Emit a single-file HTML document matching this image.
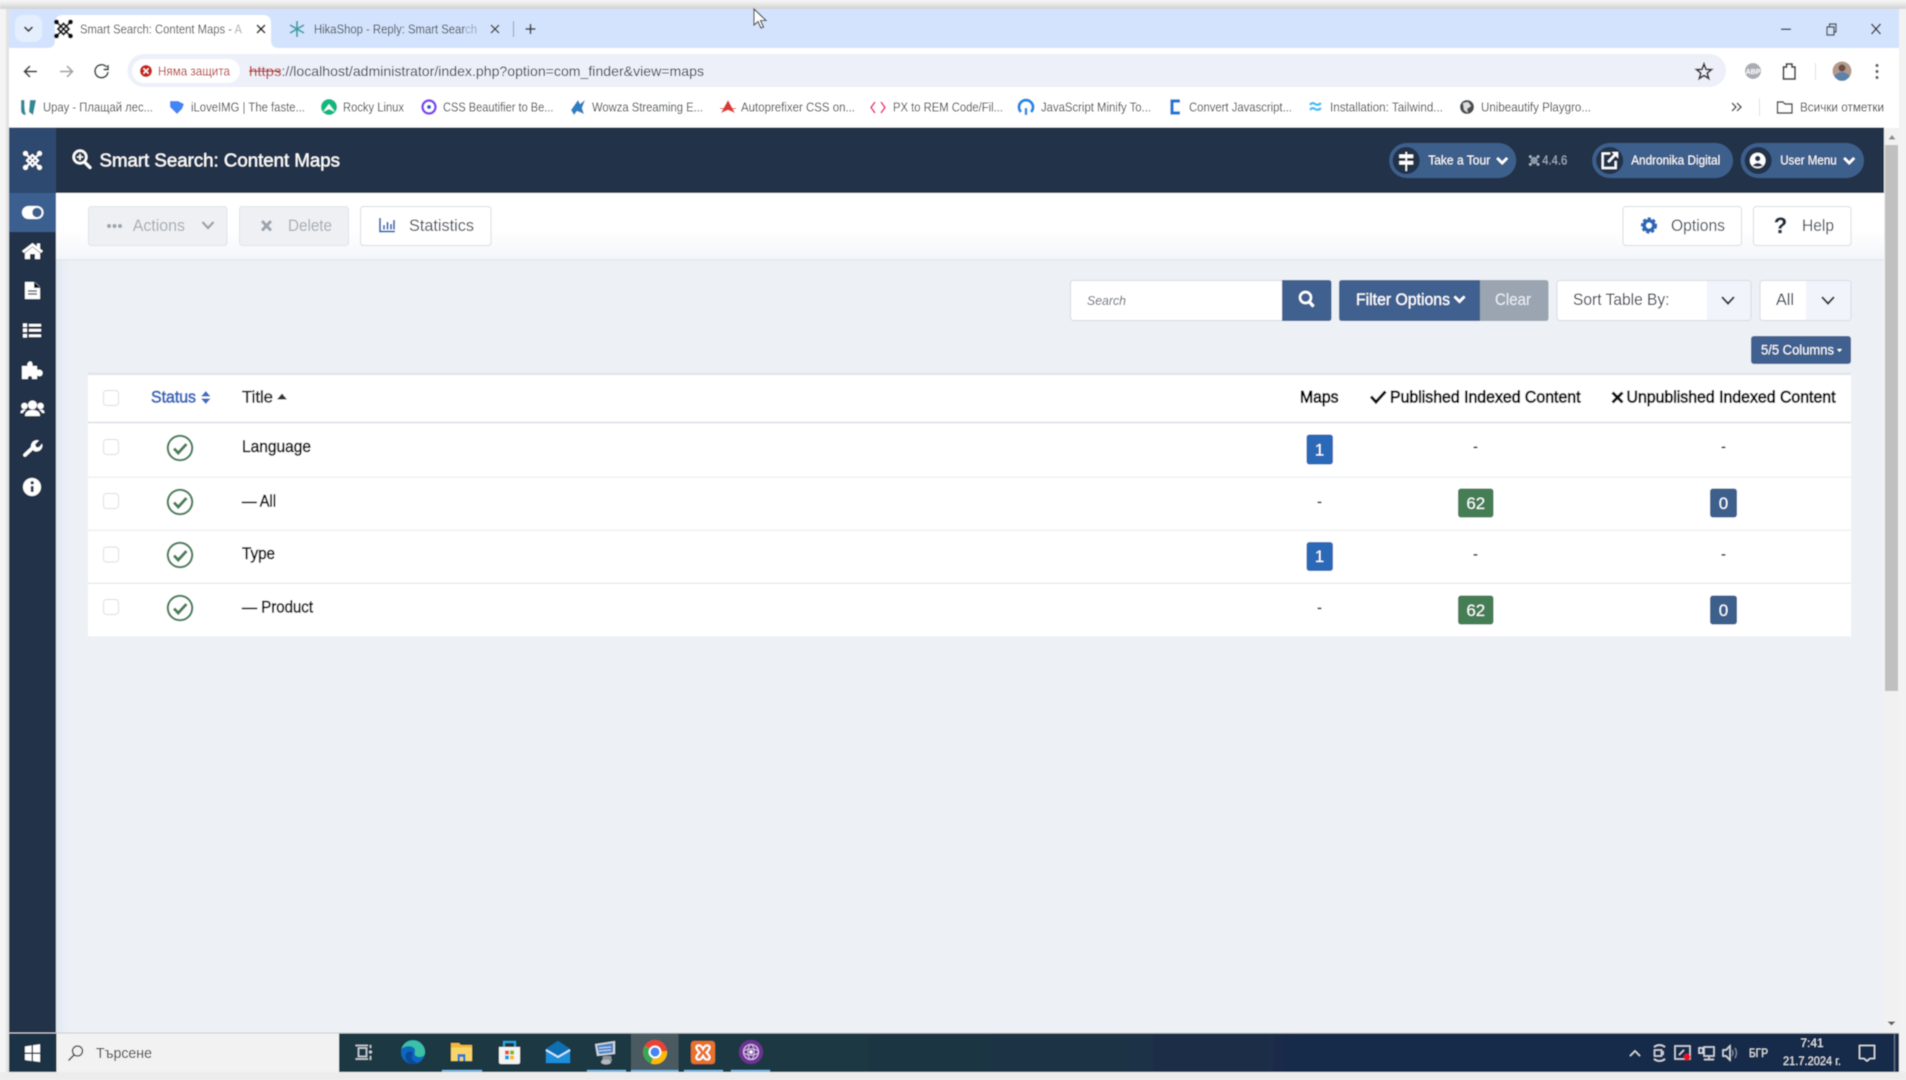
<!DOCTYPE html>
<html lang="en"><head><meta charset="utf-8"><title>Smart Search: Content Maps</title>
<style>
html,body{margin:0;padding:0;width:1906px;height:1080px;overflow:hidden;background:#f4f4f4}
svg{display:block}
text{font-family:"Liberation Sans","Noto Sans CJK JP",sans-serif;white-space:pre}
.c{font-size:13px;fill:#4a4d52}
.b{font-size:12.5px;fill:#3c4043}
.th{font-size:17px;fill:#000;stroke:#000;stroke-width:.8}
.r{font-size:17px;fill:#000;stroke:#000;stroke-width:.55}
.btn{font-size:17px}
.bd{font-size:17px;fill:#fff;text-anchor:middle}
.ck{fill:none;stroke:#457d54;stroke-width:2.2}
.ck2{fill:none;stroke:#457d54;stroke-width:3}
.si{fill:#fff}
.tb{fill:none;stroke:#d8dde3;stroke-width:1.4}
</style></head><body>
<svg width="1906" height="1080" viewBox="0 0 1906 1080" xmlns="http://www.w3.org/2000/svg">
<defs>
<filter id="bl" x="0" y="0" width="100%" height="100%"><feGaussianBlur stdDeviation="0.45"/></filter>
<linearGradient id="sub" x1="0" y1="0" x2="0" y2="1"><stop offset="0" stop-color="#fff"/><stop offset=".55" stop-color="#fff"/><stop offset="1" stop-color="#f3f6fa"/></linearGradient>
<linearGradient id="top" x1="0" y1="0" x2="0" y2="1"><stop offset="0" stop-color="#f8f8f8"/><stop offset="1" stop-color="#d2d2d2"/></linearGradient>
<linearGradient id="task" x1="0" y1="0" x2="1" y2="0"><stop offset="0" stop-color="#1f3742"/><stop offset=".45" stop-color="#1f3742"/><stop offset=".75" stop-color="#18294a"/><stop offset="1" stop-color="#18294a"/></linearGradient>
<linearGradient id="side" x1="0" y1="0" x2="1" y2="0"><stop offset="0" stop-color="#e2e9f2"/><stop offset="1" stop-color="#edf1f6"/></linearGradient>
<g id="jm"><path d="M-7-7L7 7M7-7L-7 7" fill="none" stroke="currentColor" stroke-width="1.800"/><path d="M-5.500 0L0-5.500L5.500 0L0 5.500Z" fill="none" stroke="currentColor" stroke-width="2"/><circle cx="-7" cy="-7" r="2.500" fill="currentColor"/><circle cx="7" cy="-7" r="2.500" fill="currentColor"/><circle cx="-7" cy="7" r="2.500" fill="currentColor"/><circle cx="7" cy="7" r="2.500" fill="currentColor"/></g>
<g id="okc"><circle r="12.2" class="ck"/><path d="M-6 0.5L-1.8 5L6.5-4" class="ck2"/></g>
<g id="cb"><rect x="-7.5" y="-7.5" width="15" height="15" rx="3" fill="#fff" stroke="#dfe3e8" stroke-width="1.2"/></g>
<path id="chev" d="M-5-2.5L0 2.5L5-2.5" fill="none" stroke="currentColor" stroke-width="2.6"/>
</defs>
<g filter="url(#bl)">
<!-- outer frame -->
<rect width="1906" height="1080" fill="#f4f4f4"/>
<rect x="0" y="0" width="1906" height="9" fill="url(#top)"/>
<rect x="1899" y="9" width="7" height="1071" fill="#f2f2f2"/>
<rect x="6" y="9" width="3" height="1064" fill="#e2e2e2"/>
<!-- tab strip -->
<rect x="9" y="9" width="1890" height="39" fill="#d3e3fd"/>
<rect x="15" y="15" width="27" height="27" rx="8" fill="#e5eefd"/>
<path d="M24.500 27L28.500 31L32.500 27" fill="none" stroke="#2c2f33" stroke-width="1.800"/>
<path d="M47.500 48Q55 48 55 40V23Q55 15 63 15H263Q271 15 271 23V40Q271 48 278.500 48Z" fill="#fff"/>
<use href="#jm" x="63.500" y="29" color="#111"/>
<text x="80" y="33.500" class="c" textLength="162" lengthAdjust="spacingAndGlyphs">Smart Search: Content Maps - A</text>
<rect x="232" y="18" width="12" height="22" fill="#fff" opacity=".55"/>
<path d="M257 25L265 33M265 25L257 33" stroke="#222" stroke-width="1.600"/>
<path d="M297 21V37M290 25L304 33M304 25L290 33" stroke="#3f9fa8" stroke-width="1.800"/>
<text x="314" y="33.500" class="c" textLength="163" lengthAdjust="spacingAndGlyphs">HikaShop - Reply: Smart Search</text>
<rect x="465" y="18" width="14" height="22" fill="#d3e3fd" opacity=".6"/>
<path d="M491 25L499 33M499 25L491 33" stroke="#444" stroke-width="1.500"/>
<rect x="513" y="21" width="1" height="16" fill="#8aa0bd"/>
<path d="M530.500 24V34M525.500 29H535.500" stroke="#333" stroke-width="1.500"/>
<rect x="1781" y="28.500" width="10" height="1.500" fill="#333"/>
<path d="M1827 27H1834V35H1827ZM1829.500 27V24H1836V32H1834" fill="none" stroke="#333" stroke-width="1.200"/>
<path d="M1871.500 24L1880.500 34M1880.500 24L1871.500 34" stroke="#333" stroke-width="1.400"/>
<!-- toolbar -->
<path d="M9 48H1899V128H9Z" fill="#fff"/>
<path d="M37 71.500H25M30 66L24.500 71.500L30 77" fill="none" stroke="#3c4043" stroke-width="1.800"/>
<path d="M60 71.500H72M67 66L72.500 71.500L67 77" fill="none" stroke="#a5a8ac" stroke-width="1.800"/>
<path d="M106.500 67A6.500 6.500 0 1 0 108 72M108 65V69.500H103.500" fill="none" stroke="#3c4043" stroke-width="1.700"/>
<rect x="127.500" y="54" width="1598.500" height="33" rx="16.500" fill="#edf0f9"/>
<rect x="132" y="59" width="108" height="24" rx="12" fill="#fff"/>
<circle cx="146" cy="71" r="6" fill="#c5221f"/><path d="M143.500 68.500L148.500 73.500M148.500 68.500L143.500 73.500" stroke="#fff" stroke-width="1.300"/>
<text x="158" y="75.500" font-size="12.500" fill="#b3261e" textLength="72" lengthAdjust="spacingAndGlyphs">Няма защита</text>
<text x="249" y="76" font-size="14" fill="#b3261e" textLength="32.500" lengthAdjust="spacingAndGlyphs">https</text>
<rect x="249" y="70.500" width="32" height="1.200" fill="#b3261e"/>
<text x="281.500" y="76" font-size="14" fill="#3a3d42" textLength="422.500" lengthAdjust="spacingAndGlyphs">://localhost/administrator/index.php?option=com_finder&amp;view=maps</text>
<path d="M1704 64L1706 69.300L1711.500 69.600L1707.200 73.100L1708.700 78.500L1704 75.500L1699.300 78.500L1700.800 73.100L1696.500 69.600L1702 69.300Z" fill="none" stroke="#333" stroke-width="1.700"/>
<circle cx="1753" cy="71" r="8" fill="#a9adb3"/>
<text x="1753" y="74" font-size="7" fill="#fff" text-anchor="middle" font-weight="bold">ABP</text>
<path d="M1783.500 67H1786.500V64H1792V67H1795V79H1783.500Z" fill="none" stroke="#3c4043" stroke-width="1.700"/>
<rect x="1815" y="63" width="1" height="17" fill="#d7e1ef"/>
<circle cx="1842" cy="71" r="9.500" fill="#b39a8a"/><path d="M1834 76Q1842 68 1850 76Q1847 81 1842 81Q1837 81 1834 76Z" fill="#5b82ab"/><circle cx="1842" cy="68" r="3.500" fill="#6e4d45"/>
<circle cx="1877" cy="65.500" r="1.600" fill="#5f6368"/><circle cx="1877" cy="71.500" r="1.600" fill="#5f6368"/><circle cx="1877" cy="77.500" r="1.600" fill="#5f6368"/>
<!-- bookmarks -->
<path d="M21 100V110Q21 115 26 115Q24 110 24.500 100ZM30 100L29 112L33 115L36 100Z" fill="#2f8a96"/>
<text x="43" y="111.500" class="b" textLength="110" lengthAdjust="spacingAndGlyphs">Upay - Плащай лес...</text>
<path d="M170 101H178L184 104L182 109L177 114L170 107Z" fill="#4285f4"/>
<text x="191" y="111.500" class="b" textLength="114" lengthAdjust="spacingAndGlyphs">iLoveIMG | The faste...</text>
<circle cx="329" cy="107" r="8" fill="#10b981"/><path d="M323 112L329 104L335 112L329 109Z" fill="#fff"/>
<text x="343" y="111.500" class="b" textLength="61" lengthAdjust="spacingAndGlyphs">Rocky Linux</text>
<circle cx="429" cy="107" r="6.500" fill="#fff" stroke="#7b3ff2" stroke-width="2.500"/><circle cx="429" cy="107" r="2" fill="#2b5fb8"/>
<text x="443" y="111.500" class="b" textLength="110.500" lengthAdjust="spacingAndGlyphs">CSS Beautifier to Be...</text>
<path d="M571 110L578 100L580 104L585 100L582 108L584 114L577 111L574 115Z" fill="#2d7fc1"/>
<text x="592" y="111.500" class="b" textLength="111" lengthAdjust="spacingAndGlyphs">Wowza Streaming E...</text>
<path d="M721 113L728 100L735 113L728 110Z" fill="#dd3735"/><rect x="720" y="108" width="16" height="1" fill="#dd3735"/>
<text x="741" y="111.500" class="b" textLength="114" lengthAdjust="spacingAndGlyphs">Autoprefixer CSS on...</text>
<path d="M875 102L871 107.500L875 113M881 102L885 107.500L881 113" fill="none" stroke="#e91e73" stroke-width="1.600"/>
<text x="893" y="111.500" class="b" textLength="110" lengthAdjust="spacingAndGlyphs">PX to REM Code/Fil...</text>
<path d="M1021 112A7 7 0 1 1 1031 112" fill="none" stroke="#1e88e5" stroke-width="3"/><path d="M1026 108V115" stroke="#1e88e5" stroke-width="2.500"/>
<text x="1041" y="111.500" class="b" textLength="110" lengthAdjust="spacingAndGlyphs">JavaScript Minify To...</text>
<path d="M1180 101H1172V113H1180" fill="none" stroke="#1976d2" stroke-width="3.200"/>
<text x="1189" y="111.500" class="b" textLength="103" lengthAdjust="spacingAndGlyphs">Convert Javascript...</text>
<path d="M1310 105Q1312 102 1315 104Q1318 106 1321 103M1310 110Q1312 107 1315 109Q1318 111 1321 108" fill="none" stroke="#38bdf8" stroke-width="2.400"/>
<text x="1330" y="111.500" class="b" textLength="113" lengthAdjust="spacingAndGlyphs">Installation: Tailwind...</text>
<circle cx="1467" cy="107" r="7" fill="#4a4d50"/><path d="M1463 103L1468 102L1471 106L1467 109L1468 113L1464 110Z" fill="#ddd"/>
<text x="1481" y="111.500" class="b" textLength="110" lengthAdjust="spacingAndGlyphs">Unibeautify Playgro...</text>
<path d="M1732 103L1736 107L1732 111M1737 103L1741 107L1737 111" fill="none" stroke="#3c4043" stroke-width="1.500"/>
<rect x="1759" y="98" width="1" height="18" fill="#d7e1ef"/>
<path d="M1777.500 102H1783L1785 104H1792V113H1777.500Z" fill="none" stroke="#3c4043" stroke-width="1.400"/>
<text x="1800" y="111.500" class="b" textLength="84" lengthAdjust="spacingAndGlyphs">Всички отметки</text>

<!-- main -->
<rect x="9" y="128" width="1875" height="905" fill="#edf1f6"/>
<rect x="56" y="259" width="14" height="774" fill="url(#side)"/>
<rect x="56" y="193" width="1828" height="66" fill="url(#sub)"/>
<rect x="56" y="259" width="1828" height="1.500" fill="#e3e9f1"/>
<!-- header -->
<rect x="9" y="127.500" width="1875" height="65.500" fill="#203049"/>
<rect x="9" y="127.500" width="47" height="65.500" fill="#2f4a6f"/>
<rect x="9" y="193" width="47" height="840" fill="#203049"/>
<rect x="9" y="193" width="47" height="39" fill="#3a5f8f"/>
<!-- sidebar icons -->
<use href="#jm" x="32.500" y="160.500" color="#fff"/>
<rect x="22" y="206" width="21.500" height="13" rx="6.500" fill="#fff"/><circle cx="37" cy="212.500" r="4.700" fill="#3a5f8f"/>
<path d="M22 251L32.500 243L43 251L41 253L32.500 246.500L24 253Z" class="si"/><path d="M25 253L32.500 247L40 253V259H35V254H30V259H25Z" class="si"/><rect x="37" y="243.500" width="3" height="5" class="si"/>
<path d="M25 282H35L40 287V299H25Z" class="si"/><path d="M28 291H37M28 294H37" stroke="#203049" stroke-width="1.200"/><path d="M34.500 282V287.500H40" stroke="#203049" stroke-width="1"/>
<path d="M23 323.500H27V327H23ZM23 328.500H27V332H23ZM23 334H27V337.500H23ZM29 324H41V326.500H29ZM29 329H41V331.500H29ZM29 334.500H41V337H29Z" class="si"/>
<path d="M22 366H27.500C26 362 33 358 32.500 366H37V370C41 368.500 44 372 42 375C41 377 38 376 37 375.500V379H32C33 375 27 375 28 379H22Z" class="si"/>
<circle cx="32.500" cy="405" r="4.500" class="si"/><circle cx="24.500" cy="406" r="3.200" class="si"/><circle cx="40.500" cy="406" r="3.200" class="si"/><path d="M25 416Q25 410 32.500 410Q40 410 40 416ZM20.500 413Q20.500 409.500 24.500 409.500L26 410Q23.500 411 23 413ZM44.500 413Q44.500 409.500 40.500 409.500L39 410Q41.500 411 42 413Z" class="si"/>
<path d="M25 455L33.500 447" stroke="#fff" stroke-width="3.600" stroke-linecap="round"/><path d="M31 447A6 6 0 0 1 39 440.500L35 444.500L36.500 447.500L39.500 447L42 443.500A6 6 0 0 1 34 451Z" class="si"/>
<circle cx="32" cy="487" r="9" class="si"/><rect x="30.800" y="486" width="2.800" height="6" fill="#203049"/><circle cx="32.200" cy="482.800" r="1.700" fill="#203049"/>
<!-- header title -->
<circle cx="80" cy="157" r="6.300" fill="none" stroke="#fff" stroke-width="2.400"/><path d="M84.500 162L90 167.500" stroke="#fff" stroke-width="3" stroke-linecap="round"/><path d="M80 154V160M77 157H83" stroke="#fff" stroke-width="1.600"/>
<text x="99.500" y="166.500" font-size="18.500" fill="#fff" stroke="#fff" stroke-width=".15" textLength="240.500" lengthAdjust="spacingAndGlyphs">Smart Search: Content Maps</text>
<!-- pills -->
<g transform="translate(-0.800 0)">
<rect x="1390" y="143" width="127" height="35" rx="17.500" fill="#3c5e8b"/><circle cx="1407" cy="160.500" r="13.500" fill="#203049"/>
<path d="M1400 154.500H1414V158H1400ZM1400 161H1414V164.500H1400Z" fill="#fff"/><path d="M1407 152V171" stroke="#fff" stroke-width="1.600"/>
<text x="1429" y="164.500" font-size="13" fill="#fff" textLength="62" lengthAdjust="spacingAndGlyphs">Take a Tour</text>
<use href="#chev" x="1503" y="160.500" color="#fff"/>
<use href="#jm" color="#a6b2c2" transform="translate(1535,160.500) scale(.55)"/>
<text x="1543" y="164.500" font-size="13" fill="#a6b2c2" textLength="25" lengthAdjust="spacingAndGlyphs">4.4.6</text>
<rect x="1593" y="143" width="140.800" height="35" rx="17.500" fill="#3c5e8b"/><circle cx="1610.500" cy="160.500" r="13.500" fill="#203049"/>
<path d="M1611 153.500H1603.500V168H1616.500V161" fill="none" stroke="#fff" stroke-width="2.200"/><path d="M1609 162L1617 153.500" stroke="#fff" stroke-width="2.400"/><path d="M1612.500 152H1619V158.500Z" fill="#fff"/>
<text x="1632" y="164.500" font-size="13" fill="#fff" textLength="89" lengthAdjust="spacingAndGlyphs">Andronika Digital</text>
<rect x="1741.500" y="143" width="123.300" height="35" rx="17.500" fill="#3c5e8b"/><circle cx="1759" cy="160.500" r="13.500" fill="#203049"/>
<circle cx="1758.500" cy="160.500" r="7.800" fill="#fff"/><circle cx="1758.500" cy="158.500" r="2.700" fill="#203049"/><path d="M1753.500 165.500Q1758.500 160.500 1763.500 165.500Q1758.500 168 1753.500 165.500Z" fill="#203049"/>
<text x="1781" y="164.500" font-size="13" fill="#fff" textLength="56.500" lengthAdjust="spacingAndGlyphs">User Menu</text>
<use href="#chev" x="1850" y="160.500" color="#fff"/>
</g>
<!-- toolbar buttons -->
<rect x="88.500" y="206.500" width="138.500" height="39" rx="3" fill="#eef0f3" stroke="#e0e3e8"/>
<circle cx="109" cy="226" r="2" fill="#9ca3ad"/><circle cx="114.500" cy="226" r="2" fill="#9ca3ad"/><circle cx="120" cy="226" r="2" fill="#9ca3ad"/>
<text x="132.700" y="231" class="btn" fill="#a7adb6" textLength="52.300" lengthAdjust="spacingAndGlyphs">Actions</text>
<path d="M202.500 222L208 228L213.500 222" fill="none" stroke="#9ca3ad" stroke-width="2.400"/>
<rect x="239.500" y="206.500" width="109" height="39" rx="3" fill="#eef0f3" stroke="#e0e3e8"/>
<path d="M262 221L271 230.500M271 221L262 230.500" stroke="#9ca3ad" stroke-width="3"/>
<text x="288" y="231" class="btn" fill="#a7adb6" textLength="44" lengthAdjust="spacingAndGlyphs">Delete</text>
<rect x="360.500" y="206.500" width="130.500" height="39" rx="3" fill="#fff" stroke="#d7dce3"/>
<path d="M380 218V231.500H395" fill="none" stroke="#2a69b8" stroke-width="1.800"/><path d="M384 225V229.500M387.500 222V229.500M391 224V229.500M394 220V229.500" stroke="#2a69b8" stroke-width="1.800"/>
<text x="409" y="231" class="btn" fill="#3f4752" textLength="65" lengthAdjust="spacingAndGlyphs">Statistics</text>
<g transform="translate(-1 0)">
<rect x="1624" y="206.500" width="118.500" height="39" rx="3" fill="#fff" stroke="#d7dce3"/>
<circle cx="1650" cy="225.500" r="4.800" fill="none" stroke="#2a69b8" stroke-width="3.700"/><circle cx="1650" cy="225.500" r="6.700" fill="none" stroke="#2a69b8" stroke-width="3" stroke-dasharray="3.200 1.800"/>
<text x="1672" y="231" class="btn" fill="#3f4752" textLength="54" lengthAdjust="spacingAndGlyphs">Options</text>
<rect x="1754.500" y="206.500" width="97.500" height="39" rx="3" fill="#fff" stroke="#d7dce3"/>
<text x="1781.500" y="233" font-size="22" font-weight="bold" fill="#1f2a3a" text-anchor="middle" stroke="#1f2a3a" stroke-width=".4">?</text>
<text x="1803" y="231" class="btn" fill="#3f4752" textLength="32" lengthAdjust="spacingAndGlyphs">Help</text>
</g>
<!-- filter bar -->
<rect x="1070.500" y="280.500" width="220" height="40" rx="3" fill="#fff" stroke="#d5dbe3"/>
<text x="1087" y="305" font-size="13" font-style="italic" fill="#5c6470" textLength="39" lengthAdjust="spacingAndGlyphs">Search</text>
<path d="M1282 280H1328.500Q1331.500 280 1331.500 283V318Q1331.500 321 1328.500 321H1282Z" fill="#3f6190"/>
<circle cx="1305.500" cy="297.500" r="5.500" fill="none" stroke="#fff" stroke-width="2.400"/><path d="M1309.500 302L1313.500 306.500" stroke="#fff" stroke-width="3"/>
<path d="M1342 280H1480V321H1342Q1339 321 1339 318V283Q1339 280 1342 280Z" fill="#3f6190"/>
<text x="1356" y="305" font-size="17" fill="#fff" stroke="#fff" stroke-width=".15" textLength="94" lengthAdjust="spacingAndGlyphs">Filter Options</text>
<path d="M1454.500 296.500L1459.500 301.500L1464.500 296.500" fill="none" stroke="#fff" stroke-width="2.600"/>
<g transform="translate(-1 0)">
<path d="M1481 280H1546.500Q1549.500 280 1549.500 283V318Q1549.500 321 1546.500 321H1481Z" fill="#9ba5b2"/>
<text x="1496" y="305" font-size="17" fill="#eef1f4" textLength="36" lengthAdjust="spacingAndGlyphs">Clear</text>
<rect x="1558" y="280.500" width="194" height="40" rx="3" fill="#fff" stroke="#d5dbe3"/>
<path d="M1708 281H1749Q1751.500 281 1751.500 283V318Q1751.500 320 1749 320H1708Z" fill="#f1f4fa"/>
<text x="1574" y="305" font-size="17" fill="#333a44" textLength="96.500" lengthAdjust="spacingAndGlyphs">Sort Table By:</text>
<path d="M1723 297L1729 303.500L1735 297" fill="none" stroke="#222" stroke-width="2"/>
<rect x="1761" y="280.500" width="91" height="40" rx="3" fill="#fff" stroke="#d5dbe3"/>
<path d="M1807 281H1849Q1851.500 281 1851.500 283V318Q1851.500 320 1849 320H1807Z" fill="#f1f4fa"/>
<text x="1777" y="305" font-size="17" fill="#333a44" textLength="18" lengthAdjust="spacingAndGlyphs">All</text>
<path d="M1823 297L1829 303.500L1835 297" fill="none" stroke="#222" stroke-width="2"/>
<rect x="1752" y="336" width="100" height="28" rx="3" fill="#3f6190"/>
<text x="1762" y="354.500" font-size="13.500" fill="#fff" textLength="73" lengthAdjust="spacingAndGlyphs">5/5 Columns</text>
<path d="M1838 349H1843L1840.500 352Z" fill="#fff"/>
</g>
<!-- table -->
<rect x="88" y="372" width="1763" height="265" fill="#e4e9ef" opacity=".6"/>
<rect x="88" y="375" width="1763" height="261.500" fill="#fff"/>
<rect x="88" y="373" width="1763" height="2" fill="#dfe4ea"/>
<rect x="88" y="421.500" width="1763" height="2" fill="#e1e6ec"/>
<rect x="88" y="476.500" width="1763" height="1.500" fill="#eef0f3"/>
<rect x="88" y="529.500" width="1763" height="1.500" fill="#eef0f3"/>
<rect x="88" y="582.500" width="1763" height="1.500" fill="#e8ebef"/>
<use href="#cb" x="111" y="398"/><use href="#cb" x="111" y="447"/><use href="#cb" x="111" y="501"/><use href="#cb" x="111" y="554.500"/><use href="#cb" x="111" y="607"/>
<text x="151" y="402.500" font-size="17" fill="#3568bc" stroke="#3568bc" stroke-width=".8" textLength="45" lengthAdjust="spacingAndGlyphs">Status</text>
<path d="M201 396.500L205.800 391L210.500 396.500ZM201 398.500H210.500L205.800 404Z" fill="#3d6cc0"/>
<text x="242" y="402.500" font-size="17" fill="#222" stroke="#222" stroke-width=".55" textLength="31" lengthAdjust="spacingAndGlyphs">Title</text>
<path d="M277 399.500L282 393.500L287 399.500Z" fill="#333"/>
<text x="1300" y="402.500" class="th" textLength="38.500" lengthAdjust="spacingAndGlyphs">Maps</text>
<path d="M1371 396.500L1376 402L1385.500 391.500" fill="none" stroke="#111" stroke-width="3"/>
<text x="1390" y="402.500" class="th" textLength="190.500" lengthAdjust="spacingAndGlyphs">Published Indexed Content</text>
<path d="M1612.500 392.500L1622.500 402.500M1622.500 392.500L1612.500 402.500" stroke="#111" stroke-width="3"/>
<text x="1626.500" y="402.500" class="th" textLength="209" lengthAdjust="spacingAndGlyphs">Unpublished Indexed Content</text>
<use href="#okc" x="180" y="448"/><use href="#okc" x="180" y="502"/><use href="#okc" x="180" y="555"/><use href="#okc" x="180" y="608"/>
<text x="242" y="452" class="r" textLength="69" lengthAdjust="spacingAndGlyphs">Language</text>
<text x="242" y="506.500" class="r" textLength="34" lengthAdjust="spacingAndGlyphs">— All</text>
<text x="242" y="559" class="r" textLength="33" lengthAdjust="spacingAndGlyphs">Type</text>
<text x="242" y="612.500" class="r" textLength="71" lengthAdjust="spacingAndGlyphs">— Product</text>
<g font-size="15" fill="#000" stroke="#000" stroke-width=".3" text-anchor="middle">
<text x="1475.500" y="451.500">-</text><text x="1723.500" y="451.500">-</text>
<text x="1319.500" y="506.500">-</text>
<text x="1475.500" y="559">-</text><text x="1723.500" y="559">-</text>
<text x="1319.500" y="612.500">-</text></g>
<rect x="1306.500" y="434.500" width="26.500" height="30" rx="3" fill="#2a69b8"/><text x="1319.500" y="455.500" class="bd">1</text>
<rect x="1306.500" y="542" width="26.500" height="29" rx="3" fill="#2a69b8"/><text x="1319.500" y="562" class="bd">1</text>
<rect x="1458" y="488.500" width="35.500" height="29" rx="3" fill="#457d54"/><text x="1475.800" y="509" class="bd">62</text>
<rect x="1458" y="595.500" width="35.500" height="29" rx="3" fill="#457d54"/><text x="1475.800" y="616" class="bd">62</text>
<rect x="1710" y="488.500" width="27" height="29" rx="3" fill="#3d5f8c"/><text x="1723.500" y="509" class="bd">0</text>
<rect x="1710" y="595.500" width="27" height="29" rx="3" fill="#3d5f8c"/><text x="1723.500" y="616" class="bd">0</text>
<!-- scrollbar -->
<rect x="1884" y="128" width="15" height="905" fill="#f1f1f1"/>
<rect x="1885" y="145" width="13" height="546" fill="#c0c0c0"/>
<path d="M1888.500 139.500L1892 135L1895.500 139.500Z" fill="#8a8a8a"/>
<path d="M1887.500 1021.500H1895.500L1891.500 1025.500Z" fill="#5f5f5f"/>
<!-- taskbar -->
<rect x="9" y="1032.500" width="1890" height="39.500" fill="url(#task)"/>
<rect x="9" y="1032.500" width="1890" height="1" fill="#c8ccd0"/>
<rect x="9" y="1033.500" width="47" height="38.500" fill="#1d3045"/>
<path d="M25 1046.500L31.500 1045.500V1052.500H25ZM33 1045.300L40 1044.200V1052.500H33ZM25 1054H31.500V1061L25 1060ZM33 1054H40V1062L33 1061Z" fill="#fff"/>
<rect x="56.500" y="1033.500" width="282.500" height="38.500" fill="#f2f2f2"/>
<circle cx="77.500" cy="1051" r="5" fill="none" stroke="#333" stroke-width="1.300"/><path d="M74 1055L68.500 1060.500" stroke="#333" stroke-width="1.400"/>
<text x="96" y="1058" font-size="15" fill="#333" textLength="56" lengthAdjust="spacingAndGlyphs">Търсене</text>
<!-- task view -->
<path d="M358.500 1048H366.500V1056.500H358.500ZM355.500 1045.500H368M355.500 1059H368M370.500 1045V1048M370.500 1056V1060" fill="none" stroke="#cfd6da" stroke-width="1.500"/><circle cx="370.500" cy="1052" r="1.500" fill="#cfd6da"/>
<rect x="631" y="1033.500" width="47.500" height="38.500" fill="#4a5a61"/>
<rect x="442" y="1070" width="40" height="2" fill="#7fb8e5"/><rect x="587" y="1070" width="39" height="2" fill="#7fb8e5"/><rect x="631" y="1070" width="47.500" height="2" fill="#7fb8e5"/><rect x="684" y="1070" width="39" height="2" fill="#7fb8e5"/><rect x="731" y="1070" width="39" height="2" fill="#7fb8e5"/>
<!-- edge -->
<circle cx="413" cy="1052" r="12" fill="#1068bf"/><path d="M401.500 1049A12 12 0 0 1 425 1052.500C425 1057 419 1058 416 1056C413 1054 416.500 1051 414 1048C411 1045 404 1046 401.500 1049Z" fill="#3ac1a6"/><path d="M408 1062C405 1059 404 1054 408 1052C412 1050 414 1053 412 1056C411 1059 414 1062 418 1063C414 1065 410 1064 408 1062Z" fill="#0b4a99"/>
<!-- explorer -->
<path d="M451 1043H459L461 1045H472V1061H451Z" fill="#f0b93a"/><rect x="451" y="1047.500" width="21" height="13.500" fill="#f8d568"/><path d="M457.500 1054H465.500V1061H457.500Z" fill="#2b7cd3"/><rect x="460" y="1057" width="3" height="4" fill="#f8d568"/>
<!-- store -->
<path d="M499 1047H520V1062Q520 1064 518 1064H501Q499 1064 499 1062Z" fill="#f4f4f4"/><path d="M504 1047V1042H515V1047" fill="none" stroke="#2aa7e0" stroke-width="2"/>
<rect x="505" y="1050.500" width="4" height="4" fill="#f25022"/><rect x="510" y="1050.500" width="4" height="4" fill="#7fba00"/><rect x="505" y="1055.500" width="4" height="4" fill="#00a4ef"/><rect x="510" y="1055.500" width="4" height="4" fill="#ffb900"/>
<!-- mail -->
<path d="M546 1049L558 1041L570 1049V1063H546Z" fill="#1b8fdc"/><path d="M546 1050L558 1057L570 1050L570 1049L558 1041L546 1049Z" fill="#0f6fb5"/><path d="M546 1050L558 1057L570 1050" fill="none" stroke="#d6eefc" stroke-width="1.800"/>
<!-- monitor -->
<path d="M595 1044L615 1041V1054L597 1056Z" fill="#cfd5dc"/><path d="M597 1045.500L613 1043V1052.500L599 1054Z" fill="#4b82c6"/><path d="M599 1048L611 1047M599 1051L611 1050" stroke="#cfe0f3" stroke-width="1"/><path d="M603 1056H611L612 1061H602Z" fill="#8c949c"/><ellipse cx="606" cy="1062" rx="5" ry="2.500" fill="#b4bac0"/>
<!-- chrome -->
<circle cx="655" cy="1052" r="12" fill="#ea4335"/><path d="M655 1052L645 1046A12 12 0 0 0 651 1063.500Z" fill="#34a853"/><path d="M655 1052L651 1063.500A12 12 0 0 0 667 1051Z" fill="#fbbc04"/><circle cx="655" cy="1052" r="5.500" fill="#4285f4" stroke="#fff" stroke-width="1.800"/>
<!-- xampp -->
<rect x="691" y="1041" width="24" height="23" rx="3" fill="#e8722c"/><path d="M697 1046C700 1044 702 1047 703 1049C704 1047 706 1044 709 1046C711 1048 708 1051 706.500 1052.500C708 1054 711 1057 709 1059C706 1061 704 1058 703 1056C702 1058 700 1061 697 1059C695 1057 698 1054 699.500 1052.500C698 1051 695 1048 697 1046Z" fill="none" stroke="#fff" stroke-width="2"/>
<!-- tor -->
<circle cx="751" cy="1052" r="12" fill="#6e3296"/><circle cx="751" cy="1052" r="7.500" fill="none" stroke="#d7c2e4" stroke-width="1.100"/><ellipse cx="751" cy="1052" rx="3" ry="7.500" fill="none" stroke="#d7c2e4" stroke-width="1"/><ellipse cx="751" cy="1052" rx="7.500" ry="3" fill="none" stroke="#d7c2e4" stroke-width="1"/><circle cx="751" cy="1052" r="1.800" fill="#fff"/>
<!-- tray -->
<path d="M1630 1056L1635 1051L1640 1056" class="tb"/>
<path d="M1654 1047Q1659.500 1043 1665 1047M1654 1059Q1659.500 1063 1665 1059" class="tb"/><rect x="1654.500" y="1050" width="7" height="6" class="tb"/><path d="M1663 1051V1055" class="tb"/>
<rect x="1675" y="1046" width="15" height="13" class="tb"/><path d="M1679 1055L1684 1050" class="tb"/><circle cx="1687" cy="1057" r="3.300" fill="#f01020"/>
<rect x="1704" y="1047" width="10" height="9" class="tb"/><path d="M1709 1056V1059M1704 1059.500H1714M1699 1048H1703V1053H1699Z" class="tb"/>
<path d="M1723 1050H1726L1730 1046V1060L1726 1056H1723Z" class="tb"/><path d="M1732 1050Q1734 1053 1732 1056M1735 1048Q1738 1053 1735 1058" fill="none" stroke="#8a95a5" stroke-width="1"/>
<text x="1749" y="1057" font-size="12" fill="#e5e9ee" textLength="19" lengthAdjust="spacingAndGlyphs">БГР</text>
<text x="1812" y="1047" font-size="12" fill="#e5e9ee" text-anchor="middle">7:41</text>
<text x="1783" y="1065" font-size="12" fill="#e5e9ee" textLength="58" lengthAdjust="spacingAndGlyphs">21.7.2024 г.</text>
<path d="M1859.500 1045.500H1874.500V1058.500H1870L1867 1061L1864 1058.500H1859.500Z" fill="none" stroke="#e5e9ee" stroke-width="1.300"/>
<rect x="1894" y="1034" width="1" height="38" fill="#6e7a88"/>
<!-- bottom shadow -->
<rect x="0" y="1072" width="1906" height="8" fill="#ececec"/>
<!-- cursor -->
<path d="M754 9V25L758 21.500L761 28L763.500 27L760.500 20.500H766Z" fill="#fff" stroke="#222" stroke-width="1.100"/>
</g>
</svg>
</body></html>
